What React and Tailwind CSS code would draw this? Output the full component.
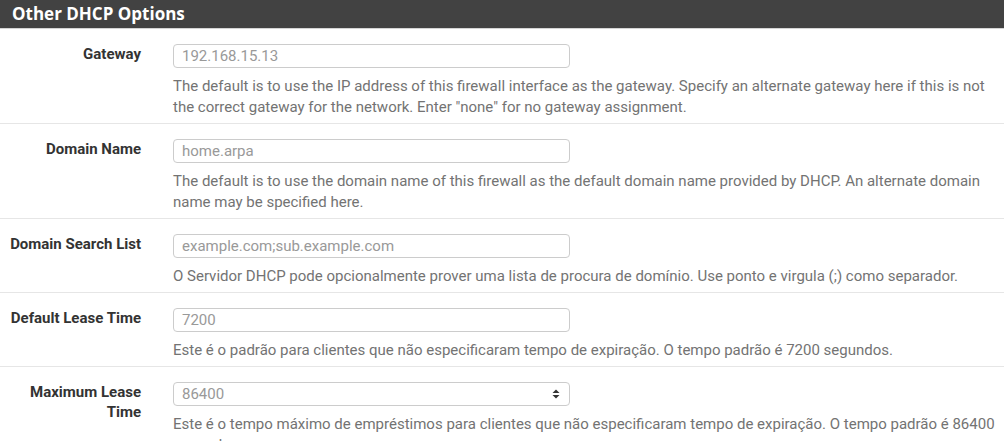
import React from "react";

const rows = [
  {
    label: "Gateway",
    value: "192.168.15.13",
    help: 'The default is to use the IP address of this firewall interface as the gateway. Specify an alternate gateway here if this is not the correct gateway for the network. Enter "none" for no gateway assignment.',
  },
  {
    label: "Domain Name",
    value: "home.arpa",
    help: "The default is to use the domain name of this firewall as the default domain name provided by DHCP. An alternate domain name may be specified here.",
  },
  {
    label: "Domain Search List",
    value: "example.com;sub.example.com",
    help: "O Servidor DHCP pode opcionalmente prover uma lista de procura de domínio. Use ponto e virgula (;) como separador.",
  },
  {
    label: "Default Lease Time",
    value: "7200",
    help: "Este é o padrão para clientes que não especificaram tempo de expiração. O tempo padrão é 7200 segundos.",
  },
  {
    label: "Maximum Lease Time",
    value: "86400",
    spinner: true,
    help: "Este é o tempo máximo de empréstimos para clientes que não especificaram tempo de expiração. O tempo padrão é 86400 segundos.",
  },
];

function Spinner() {
  return (
    <svg width="8" height="12" viewBox="0 0 8 12" className="shrink-0">
      <path d="M4 1.5 L7.5 5 L0.5 5 Z" fill="#333" />
      <path d="M4 10.5 L7.5 7 L0.5 7 Z" fill="#333" />
    </svg>
  );
}

export default function App() {
  return (
    <div
      className="w-[1004px] h-[441px] overflow-hidden bg-white"
      style={{ fontFamily: "Roboto, 'Liberation Sans', sans-serif" }}
    >
      <div
        className="h-7 bg-[#424242] border-b border-[#d4d4d4] box-content flex items-center px-3 text-white font-bold text-[17px]"
        style={{ fontFamily: "'Open Sans', Roboto, sans-serif" }}
      >
        Other DHCP Options
      </div>
      {rows.map((r, i) => (
        <div key={i} className="flex border-b border-[#e6e6e6]">
          <div className="w-[157px] shrink-0 pl-1 pr-4 pt-[15px] text-right font-bold text-[15px] leading-[20px] text-[#333]">
            {r.label}
          </div>
          <div className="flex-1 pl-4 pt-[15px] pb-[5px] pr-[5px]">
            <div className="w-[397px] h-[24px] border border-[#cccccc] rounded-[4px] flex items-center justify-between pl-2 pr-[9px] text-[15px]">
              <span className="text-[#999]">{r.value}</span>
              {r.spinner && <Spinner />}
            </div>
            <div className="mt-[8px] text-[15px] leading-[21px] text-[#737373]">
              {r.help}
            </div>
          </div>
        </div>
      ))}
    </div>
  );
}
